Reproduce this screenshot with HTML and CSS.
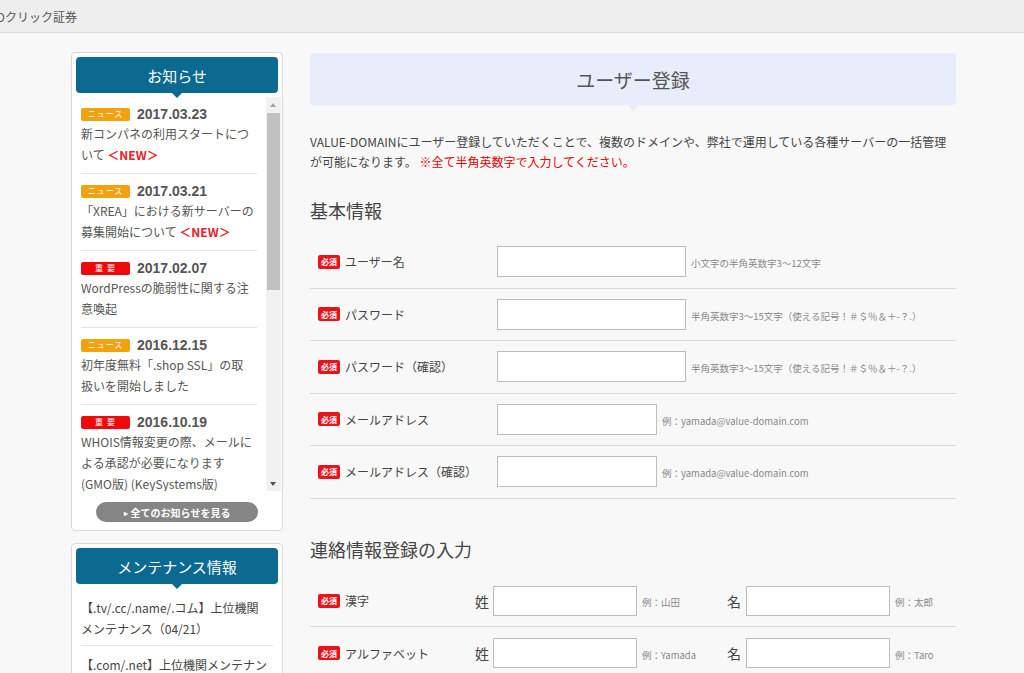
FILE: index.html
```html
<!DOCTYPE html>
<html lang="ja">
<head>
<meta charset="utf-8">
<title>ユーザー登録</title>
<link rel="stylesheet" href="styles.css">
</head>
<body>
<header class="topbar"><span class="brand">GMOクリック証券</span></header>
<div class="layout">
  <aside class="sidebar">
    <section class="box">
      <h3 class="box-head">お知らせ</h3>
      <div class="news">
        <ul class="news-list">
          <li class="news-item">
            <div class="news-meta"><span class="tag tag-news">ニュース</span><span class="date">2017.03.23</span></div>
            <p class="news-text">新コンパネの利用スタートにつ<br>いて <span class="new">＜NEW＞</span></p>
          </li>
          <li class="news-item">
            <div class="news-meta"><span class="tag tag-news">ニュース</span><span class="date">2017.03.21</span></div>
            <p class="news-text">「XREA」における新サーバーの<br>募集開始について <span class="new">＜NEW＞</span></p>
          </li>
          <li class="news-item">
            <div class="news-meta"><span class="tag tag-imp">重 要</span><span class="date">2017.02.07</span></div>
            <p class="news-text">WordPressの脆弱性に関する注<br>意喚起</p>
          </li>
          <li class="news-item">
            <div class="news-meta"><span class="tag tag-news">ニュース</span><span class="date">2016.12.15</span></div>
            <p class="news-text">初年度無料「.shop SSL」の取<br>扱いを開始しました</p>
          </li>
          <li class="news-item">
            <div class="news-meta"><span class="tag tag-imp">重 要</span><span class="date">2016.10.19</span></div>
            <p class="news-text">WHOIS情報変更の際、メールに<br>よる承認が必要になります<br>(GMO版) (KeySystems版)</p>
          </li>
        </ul>
        <div class="scrollbar">
          <span class="sb-arrow sb-up"></span>
          <span class="sb-track"><span class="sb-thumb"></span></span>
          <span class="sb-arrow sb-down"></span>
        </div>
      </div>
      <a class="more-btn"><span class="more-arrow">▸</span>全てのお知らせを見る</a>
    </section>
    <section class="box box-maint">
      <h3 class="box-head">メンテナンス情報</h3>
      <ul class="maint-list">
        <li>【.tv/.cc/.name/.コム】上位機関<br>メンテナンス（04/21）</li>
        <li>【.com/.net】上位機関メンテナン<br>ス（04/20）</li>
      </ul>
    </section>
  </aside>

  <main class="main">
    <div class="page-title"><h1>ユーザー登録</h1></div>
    <p class="intro">VALUE-DOMAINにユーザー登録していただくことで、複数のドメインや、弊社で運用している各種サーバーの一括管理が可能になります。 <span class="warn">※全て半角英数字で入力してください。</span></p>

    <h2 class="section-title">基本情報</h2>
    <div class="form-table">
      <div class="form-row">
        <div class="form-label"><span class="req">必須</span>ユーザー名</div>
        <input class="field field-lg" type="text">
        <span class="hint">小文字の半角英数字3～12文字</span>
      </div>
      <div class="form-row">
        <div class="form-label"><span class="req">必須</span>パスワード</div>
        <input class="field field-lg" type="password">
        <span class="hint">半角英数字3～15文字（使える記号！＃＄％＆＋-？.）</span>
      </div>
      <div class="form-row">
        <div class="form-label"><span class="req">必須</span>パスワード（確認）</div>
        <input class="field field-lg" type="password">
        <span class="hint">半角英数字3～15文字（使える記号！＃＄％＆＋-？.）</span>
      </div>
      <div class="form-row">
        <div class="form-label"><span class="req">必須</span>メールアドレス</div>
        <input class="field field-md" type="text">
        <span class="hint">例：yamada@value-domain.com</span>
      </div>
      <div class="form-row">
        <div class="form-label"><span class="req">必須</span>メールアドレス（確認）</div>
        <input class="field field-md" type="text">
        <span class="hint">例：yamada@value-domain.com</span>
      </div>
    </div>

    <h2 class="section-title section-contact">連絡情報登録の入力</h2>
    <div class="form-table">
      <div class="form-row form-row-contact">
        <div class="form-label form-label-narrow"><span class="req">必須</span>漢字</div>
        <span class="name-key">姓</span>
        <input class="field field-sm" type="text">
        <span class="hint hint-fixed">例：山田</span>
        <span class="name-key name-key-2">名</span>
        <input class="field field-sm" type="text">
        <span class="hint">例：太郎</span>
      </div>
      <div class="form-row form-row-contact">
        <div class="form-label form-label-narrow"><span class="req">必須</span>アルファベット</div>
        <span class="name-key">姓</span>
        <input class="field field-sm" type="text">
        <span class="hint hint-fixed">例：Yamada</span>
        <span class="name-key name-key-2">名</span>
        <input class="field field-sm" type="text">
        <span class="hint">例：Taro</span>
      </div>
    </div>
  </main>
</div>
</body>
</html>
```

FILE: styles.css
```css
* { box-sizing: border-box; }
html, body { margin: 0; padding: 0; }
body {
  background: #f8f8f8;
  font-family: "Noto Sans CJK JP", "Noto Sans", sans-serif;
  color: #444;
  overflow: hidden;
}

/* top bar */
.topbar {
  height: 33px;
  background: #eeeeee;
  border-bottom: 1px solid #dcdcdc;
  display: flex;
  align-items: center;
}
.brand { font-size: 12px; color: #555; margin-left: -22px; white-space: nowrap; }

/* layout */
.layout { display: flex; align-items: flex-start; padding: 19px 0 0 71px; }

/* sidebar */
.sidebar { width: 212px; flex: none; display: flex; flex-direction: column; gap: 12px; }
.box {
  background: #fff;
  border: 1px solid #d9d9d9;
  border-radius: 4px;
  padding: 4px 4px 8px;
}
.box-head {
  position: relative;
  margin: 0;
  height: 36px;
  background: #0c6a91;
  color: #fff;
  border-radius: 4px;
  font-size: 15px;
  font-weight: normal;
  display: flex;
  align-items: center;
  justify-content: center;
}
.box-head::after {
  content: "";
  position: absolute;
  left: 50%;
  bottom: -5px;
  margin-left: -5px;
  border-left: 5px solid transparent;
  border-right: 5px solid transparent;
  border-top: 5px solid #0c6a91;
}

.news { display: flex; height: 394px; margin: 4px -3px 0 0; }
.news-list {
  flex: 1;
  overflow: hidden;
  list-style: none;
  margin: 0;
  padding: 0 9px 0 5px;
}
.news-item { padding: 9px 0 8px; border-bottom: 1px solid #e3e3e3; }
.news-meta { display: flex; align-items: center; height: 16px; margin-bottom: 1px; }
.tag {
  width: 49px;
  height: 13px;
  font-size: 8px;
  line-height: 1;
  color: #fff;
  display: flex;
  align-items: center;
  justify-content: center;
  letter-spacing: 1px;
  border-radius: 2px;
  flex: none;
}
.tag-news { background: #f3a20f; }
.tag-imp { background: #ee0a0a; }
.date {
  margin-left: 7px;
  font-family: "Liberation Sans", Arial, sans-serif;
  font-weight: bold;
  font-size: 14px;
  color: #555;
}
.news-text { margin: 0; font-size: 12px; line-height: 21px; color: #555; }
.new { color: #e8202a; font-weight: bold; }

.scrollbar { width: 15px; flex: none; background: #f1f1f1; display: flex; flex-direction: column; }
.sb-arrow { height: 15px; position: relative; flex: none; }
.sb-arrow::before {
  content: "";
  position: absolute;
  left: 4px;
  top: 6px;
  border-left: 3.5px solid transparent;
  border-right: 3.5px solid transparent;
}
.sb-up::before { border-bottom: 4px solid #a3a3a3; }
.sb-down::before { border-top: 4px solid #505050; }
.sb-track { flex: 1; padding-top: 1px; }
.sb-thumb { display: block; margin: 0 1px; height: 177px; background: #c1c1c1; }

.more-btn {
  display: flex;
  width: 162px;
  height: 20px;
  margin: 11px auto 0;
  background: #858585;
  border-radius: 10px;
  color: #fff;
  font-size: 10px;
  font-weight: bold;
  align-items: center;
  justify-content: center;
}
.more-arrow { font-size: 8px; margin-right: 3px; }

.maint-list { list-style: none; margin: 0; padding: 5px 5px 0; }
.maint-list li {
  padding: 8px 0 6px;
  border-bottom: 1px solid #e3e3e3;
  font-size: 12px;
  line-height: 21px;
  color: #444;
}

/* main */
.main { width: 646px; flex: none; margin-left: 27px; margin-top: 1px; }
.page-title {
  position: relative;
  height: 52px;
  background: #e8ecfb;
  border-radius: 3px;
  display: flex;
  align-items: center;
  justify-content: center;
}
.page-title::after {
  content: "";
  position: absolute;
  left: 50%;
  bottom: -6px;
  margin-left: -6px;
  border-left: 6px solid transparent;
  border-right: 6px solid transparent;
  border-top: 6px solid #e8ecfb;
}
.page-title h1 { margin: 0; font-size: 19px; font-weight: normal; color: #555; }

.intro { margin: 27px 0 0; font-size: 12px; line-height: 20px; color: #444; }
.warn { color: #e60000; }

.section-title {
  margin: 25px 0 13px;
  font-size: 18px;
  font-weight: normal;
  line-height: 26px;
  color: #444;
}
.section-contact { margin-top: 37px; }

.form-row {
  display: flex;
  align-items: center;
  padding: 10px 0 10.5px;
  border-bottom: 1px solid #d9d9d9;
}
.form-row-contact { padding: 11px 0 10.5px; }
.form-label {
  width: 187px;
  flex: none;
  padding-left: 8px;
  display: flex;
  align-items: center;
  font-size: 12px;
  color: #444;
}
.form-label-narrow { width: 165px; }
.req {
  width: 22px;
  height: 14px;
  background: #e8141b;
  color: #fff;
  font-size: 8px;
  font-weight: bold;
  border-radius: 2px;
  margin-right: 5px;
  display: flex;
  align-items: center;
  justify-content: center;
  flex: none;
}
.field {
  height: 31px;
  border: 1px solid #bdbdbd;
  background: #fff;
  margin: 0;
  padding: 0 6px;
  flex: none;
}
.field-lg { width: 189px; }
.field-md { width: 160px; }
.field-sm { width: 144px; height: 30px; }
.hint { margin-left: 5px; margin-top: 3px; font-size: 9.5px; color: #888; white-space: nowrap; }
.hint-fixed { width: 85px; flex: none; }
.name-key { width: 14px; margin-right: 4px; font-size: 14px; color: #444; flex: none; }
.name-key-2 { margin-right: 5px; }
```
